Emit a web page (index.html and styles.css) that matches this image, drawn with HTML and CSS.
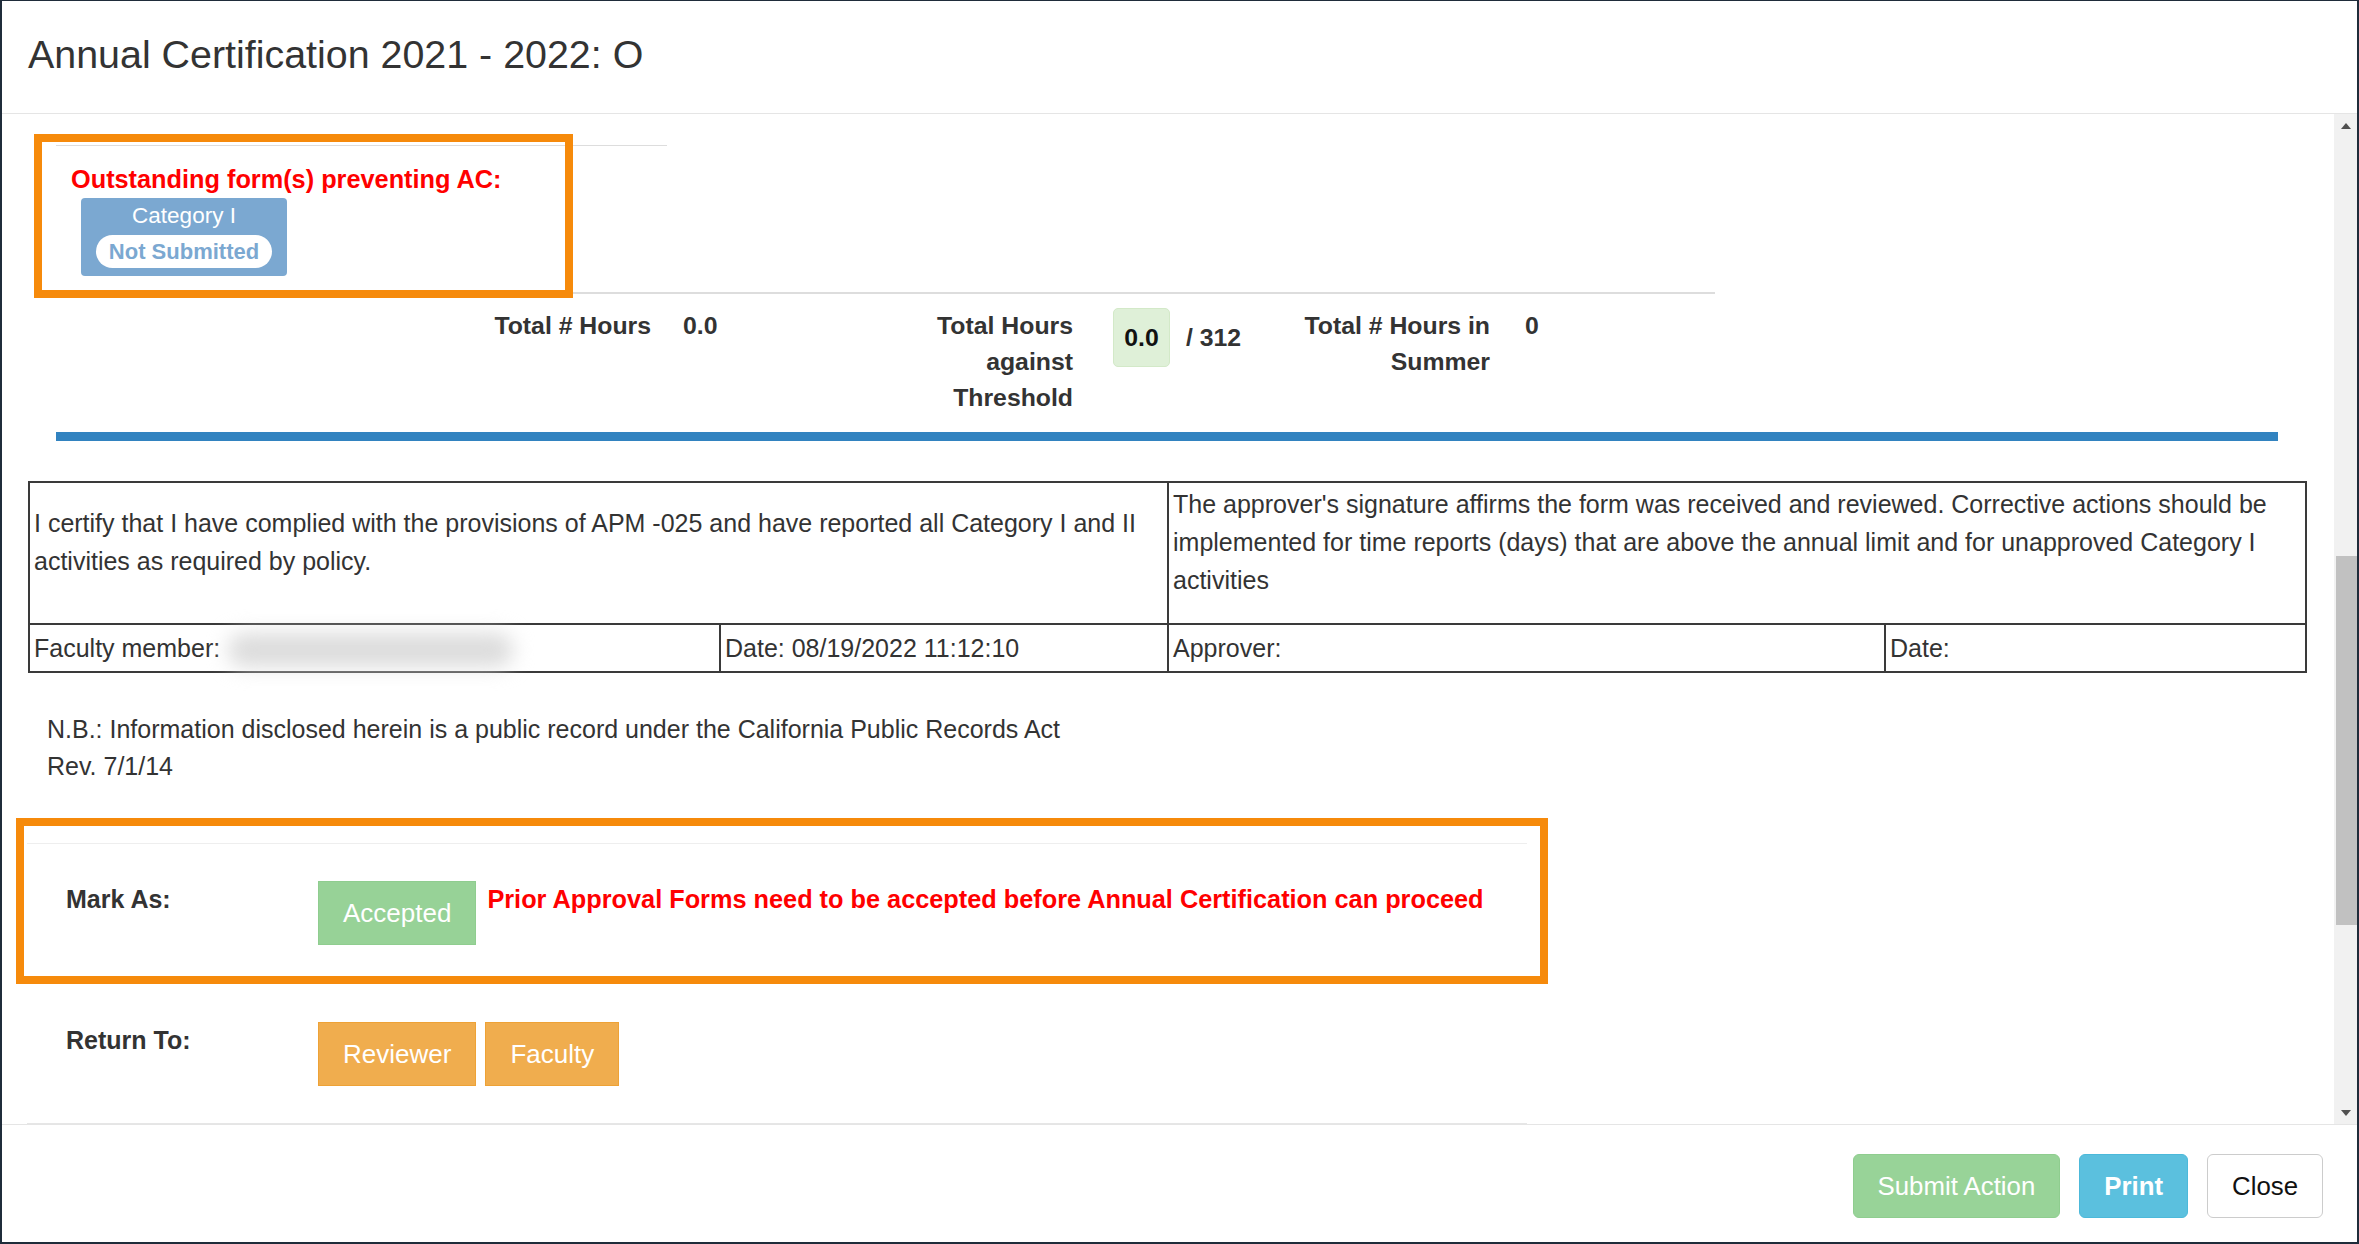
FILE: index.html
```html
<!DOCTYPE html>
<html lang="en">
<head>
<meta charset="utf-8">
<title>Annual Certification</title>
<link rel="stylesheet" href="styles.css">
</head>
<body>
<div class="modal">
  <div class="modal-header">
    <h4 class="modal-title">Annual Certification 2021 - 2022: O</h4>
  </div>
  <div class="modal-body">
    <div class="scroll-content">
      <div class="outstanding">
        <div class="outstanding-title">Outstanding form(s) preventing AC:</div>
        <div class="form-badge">
          <span class="form-badge-name">Category I</span>
          <span class="form-badge-status">Not Submitted</span>
        </div>
      </div>

      <div class="totals">
        <div class="t-label">Total # Hours</div>
        <div class="t-value v1">0.0</div>
        <div class="t-label">Total Hours against Threshold</div>
        <div class="t-value v2"><span class="threshold-badge">0.0</span><span>/ 312</span></div>
        <div class="t-label">Total # Hours in Summer</div>
        <div class="t-value v3">0</div>
      </div>

      <div class="blue-bar"></div>

      <table class="cert-table">
        <colgroup>
          <col class="c1"><col class="c2"><col class="c3"><col class="c4">
        </colgroup>
        <tr class="r1">
          <td colspan="2">I certify that I have complied with the provisions of APM -025 and have reported all Category I and II activities as required by policy.</td>
          <td colspan="2" class="top">The approver's signature affirms the form was received and reviewed. Corrective actions should be implemented for time reports (days) that are above the annual limit and for unapproved Category I activities</td>
        </tr>
        <tr class="r2">
          <td>Faculty member:<span class="blurred"></span></td>
          <td>Date: 08/19/2022 11:12:10</td>
          <td>Approver:</td>
          <td>Date:</td>
        </tr>
      </table>

      <div class="notice">
        <p>N.B.: Information disclosed herein is a public record under the California Public Records Act</p>
        <p>Rev. 7/1/14</p>
      </div>

      <div class="actions">
        <div class="action-row">
          <div class="action-label">Mark As:</div>
          <div class="action-controls">
            <button class="btn btn-accept">Accepted</button>
            <span class="action-warning">Prior Approval Forms need to be accepted before Annual Certification can proceed</span>
          </div>
        </div>
        <div class="action-row return-row">
          <div class="action-label">Return To:</div>
          <div class="action-controls">
            <button class="btn btn-warn">Reviewer</button>
            <button class="btn btn-warn">Faculty</button>
          </div>
        </div>
        <div class="actions-end"></div>
      </div>
    </div>
    <div class="scrollbar">
      <div class="sb-btn"><svg width="10" height="6" viewBox="0 0 10 6"><polygon points="5,0 10,6 0,6" fill="#505050"/></svg></div>
      <div class="sb-track"><div class="sb-thumb"></div></div>
      <div class="sb-btn"><svg width="10" height="6" viewBox="0 0 10 6"><polygon points="0,0 10,0 5,6" fill="#505050"/></svg></div>
    </div>
  </div>
  <div class="modal-footer">
    <button class="fbtn fbtn-submit">Submit Action</button>
    <button class="fbtn fbtn-print">Print</button>
    <button class="fbtn fbtn-close">Close</button>
  </div>

  <div class="highlight highlight-outstanding"></div>
  <div class="highlight highlight-actions"></div>
</div>
</body>
</html>
```

FILE: styles.css
```css
* { box-sizing: border-box; }

html, body {
  margin: 0;
  padding: 0;
  background: #ffffff;
}

body {
  font-family: "Liberation Sans", Arial, sans-serif;
  font-size: 25px;
  color: #333333;
}

.modal {
  position: relative;
  height: 1244px;
  width: 2359px;
  border-style: solid;
  border-color: #1f2c3a;
  border-width: 1px 2px 2px 2px;
  display: flex;
  flex-direction: column;
  background: #ffffff;
  overflow: hidden;
}

/* header */
.modal-header {
  padding: 32px 26px 37px;
  border-bottom: 1px solid #e5e5e5;
  flex: none;
}

.modal-title {
  margin: 0;
  font-size: 39.4px;
  line-height: 43px;
  font-weight: normal;
  color: #333333;
}

/* body */
.modal-body {
  flex: 1;
  display: flex;
  min-height: 0;
}

.scroll-content {
  flex: 1;
  overflow: hidden;
  min-width: 0;
}

/* outstanding forms */
.outstanding {
  margin: 31px 0 0 54px;
  width: 611px;
  border-top: 1px solid #dddddd;
  padding: 16px 0 0 15px;
}

.outstanding-title {
  color: #ff0000;
  font-weight: bold;
  font-size: 25.3px;
  line-height: 34px;
}

.form-badge {
  margin: 2px 0 0 10px;
  width: 206px;
  height: 78px;
  background: #7ba8d1;
  border-radius: 4px;
  display: flex;
  flex-direction: column;
  align-items: center;
  padding-top: 3px;
}

.form-badge-name {
  color: #ffffff;
  font-size: 22.5px;
  line-height: 30px;
}

.form-badge-status {
  margin-top: 4px;
  background: #ffffff;
  color: #7ba8d1;
  font-weight: bold;
  font-size: 22px;
  line-height: 33px;
  height: 33px;
  padding: 0 13px;
  border-radius: 17px;
}

/* totals */
.totals {
  margin: 16px 0 0 32px;
  width: 1681px;
  border-top: 2px solid #dddddd;
  padding-top: 14px;
  display: grid;
  grid-template-columns: 617px 222px 200px 217px 200px 1fr;
  font-weight: bold;
  font-size: 24.8px;
  line-height: 36px;
  color: #333333;
}

.t-label {
  text-align: right;
}

.t-value.v1 { padding-left: 32px; }
.t-value.v3 { padding-left: 35px; }

.t-value.v2 {
  padding-left: 40px;
  display: flex;
  align-items: flex-start;
}

.t-value.v2 > span:last-child {
  margin-left: 16px;
  padding-top: 19px;
  line-height: 22px;
}

.threshold-badge {
  width: 57px;
  height: 59px;
  background: #dff0d8;
  border: 1px solid #d3e9c8;
  border-radius: 5px;
  color: #111111;
  display: flex;
  align-items: center;
  justify-content: center;
  padding-top: 1px;
}

.blue-bar {
  margin: 16px 56px 0 54px;
  height: 9px;
  background: #3283c0;
}

/* certification table */
.cert-table {
  margin: 40px 0 0 26px;
  width: 2277px;
  border-collapse: collapse;
  table-layout: fixed;
  font-size: 25px;
  line-height: 38px;
  color: #333333;
}

.cert-table col.c1 { width: 691px; }
.cert-table col.c2 { width: 448px; }
.cert-table col.c3 { width: 717px; }
.cert-table col.c4 { width: 421px; }

.cert-table td {
  border: 2px solid #3a3a3a;
  padding: 0 3px 0 4px;
  vertical-align: middle;
}

.cert-table tr.r1 td {
  height: 142px;
  padding-top: 1px;
  padding-bottom: 23px;
}

.cert-table tr.r2 td {
  height: 48px;
  padding-top: 0;
}

.blurred {
  display: inline-block;
  width: 285px;
  height: 34px;
  margin-left: 8px;
  vertical-align: middle;
  background: #dcdcdc;
  border-radius: 16px;
  filter: blur(10px);
}

/* notice */
.notice {
  margin: 38px 0 0 45px;
  font-size: 25px;
  line-height: 37px;
}

.notice p {
  margin: 0;
}

/* actions */
.actions {
  margin: 58px 0 0 25px;
  width: 1500px;
  border-top: 1px solid #eeeeee;
}

.action-row {
  display: flex;
  align-items: flex-start;
  padding-left: 39px;
  margin-top: 37px;
}

.action-row.return-row {
  margin-top: 77px;
}

.action-label {
  width: 252px;
  flex: none;
  font-weight: bold;
  font-size: 25px;
  line-height: 36px;
  color: #333333;
  margin-top: 0;
}

.action-controls {
  display: flex;
  align-items: flex-start;
  gap: 9px;
}

.btn {
  font-family: "Liberation Sans", Arial, sans-serif;
  font-size: 26px;
  height: 64px;
  padding: 0 24px;
  color: #ffffff;
  border: 1px solid transparent;
  border-radius: 0;
  line-height: 62px;
}

.btn-accept {
  background: #97d297;
  border-color: #8fcd8f;
}

.btn-warn {
  background: #f0ad4e;
  border-color: #eea236;
}

.action-warning {
  color: #ff0000;
  font-weight: bold;
  font-size: 25.3px;
  line-height: 36px;
  margin-left: 2px;
  margin-top: 0;
}

.actions-end {
  margin-top: 37px;
  border-top: 1px solid #e6e6e6;
  height: 2px;
}

/* fake scrollbar */
.scrollbar {
  flex: none;
  width: 23px;
  background: #f1f1f1;
  display: flex;
  flex-direction: column;
}

.sb-btn {
  height: 23px;
  flex: none;
  display: flex;
  align-items: center;
  justify-content: center;
}

.sb-track {
  flex: 1;
}

.sb-thumb {
  margin: 419px 0 0 2px;
  height: 369px;
  background: #c1c1c1;
}

/* footer */
.modal-footer {
  flex: none;
  border-top: 1px solid #e5e5e5;
  padding: 29px 34px 24px 0;
  display: flex;
  justify-content: flex-end;
  gap: 19px;
}

.fbtn {
  font-family: "Liberation Sans", Arial, sans-serif;
  font-size: 25.8px;
  height: 64px;
  padding: 0 24px;
  border: 1px solid transparent;
  border-radius: 6px;
  line-height: 62px;
}

.fbtn-submit {
  background: #98d398;
  border-color: #8fcd8f;
  color: #ffffff;
}

.fbtn-print {
  background: #5bc0de;
  border-color: #4cb9da;
  color: #ffffff;
  font-weight: bold;
}

.fbtn-close {
  background: #ffffff;
  border-color: #cccccc;
  color: #111111;
}

/* orange annotation overlays */
.highlight {
  position: absolute;
  border: 8px solid #f68a0b;
  pointer-events: none;
}

.highlight-outstanding {
  left: 32px;
  top: 133px;
  width: 539px;
  height: 164px;
}

.highlight-actions {
  left: 14px;
  top: 817px;
  width: 1532px;
  height: 166px;
}
```
